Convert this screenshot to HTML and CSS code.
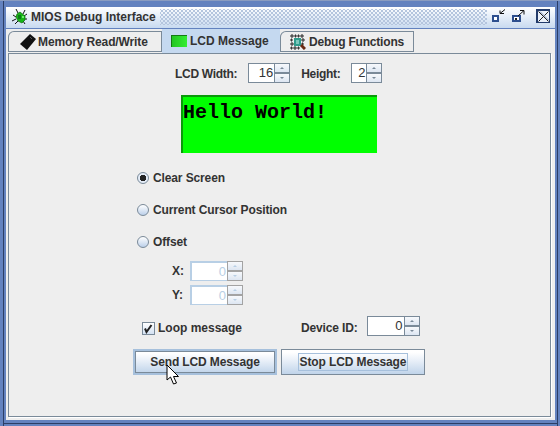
FILE: index.html
```html
<!DOCTYPE html>
<html lang="en">
<head>
    <meta charset="UTF-8">
    <title>MIOS Debug Interface</title>
    <link rel="stylesheet" href="styles.css">
</head>
<body>
    <div class="window">
        <div class="title-bar">
            <svg class="app-icon" width="16" height="16" viewBox="0 0 16 16">
                <path d="M4 0l2 4M1 6l3 2M0 12l4-2M3 15l3-3M13 1l-2 4M15 5l-3 2M15 10l-3 0M13 15l-2-3" stroke="#111" fill="none"/>
                <path d="M5 5l3-2 5 4 0 4-3 3-4-2-2-4z" fill="#17b517" stroke="#0a6a0a" stroke-width=".7"/>
                <path d="M6 6h3v4H6z" fill="#0d7a1a"/>
                <path d="M10 7h2v2h-2z" fill="#6ff06f"/>
            </svg>
            <span class="title-text">MIOS Debug Interface</span>
            <div class="title-dots"></div>
            <div class="title-buttons">
                <svg width="16" height="16" viewBox="0 0 16 16">
                    <rect x="2" y="7" width="5" height="5" fill="#fff" stroke="#2d4f8f" stroke-width="2"/>
                    <path d="M14 .5L9 4.5M9 1.5v3h4" stroke="#111" fill="none"/>
                </svg>
                <svg width="16" height="16" viewBox="0 0 16 16">
                    <rect x="3" y="7" width="7" height="5" fill="#fff" stroke="#2d4f8f" stroke-width="2"/>
                    <path d="M5 9h2v2H5z" fill="#222"/>
                    <path d="M8 7L14 1.5M10 1.5h4v4" stroke="#111" fill="none"/>
                </svg>
                <div class="close-btn">
                    <svg width="11" height="11" viewBox="0 0 11 11">
                        <path d="M.5 .5l10 10M10.5 .5l-10 10" stroke="#222" fill="none"/>
                        <path d="M2 .5l9 9" stroke="#8a9cc0" fill="none"/>
                    </svg>
                </div>
            </div>
        </div>

        <div class="tab-area">
            <div class="tabs">
                <div class="tab tab-memory">
                    <svg width="16" height="16" viewBox="0 0 16 16">
                        <path d="M10 0l6 5-9 11-7-6z" fill="#111"/>
                        <path d="M10 3l2 2" stroke="#555"/>
                    </svg>
                    Memory Read/Write
                </div>
                <div class="tab tab-active">
                    <span class="lcd-icon"></span>
                    LCD Message
                </div>
                <div class="tab tab-debug">
                    <svg width="16" height="16" viewBox="0 0 16 16">
                        <path d="M1 1h2v2H1zM5 1h1v2H5zM8 1h1v2H8zM11 1h2v2h-2zM1 5h1v2H1zM12 5h2v2h-2zM1 9h2v2H1zM12 9h1v2h-1zM1 13h1v2H1zM4 13h2v2H4zM8 13h1v2H8z" fill="#fff" stroke="#111" stroke-width=".9"/>
                        <rect x="4" y="4" width="7" height="8" fill="#2f9c8c"/>
                        <path d="M6 6h3v4H6z" fill="#7cc8bc"/>
                        <path d="M11 11l4 4" stroke="#6b2a10" stroke-width="3"/>
                    </svg>
                    Debug Functions
                </div>
            </div>

            <div class="panel">
                <div class="size-row">
                    <span class="label label-tight">LCD Width:</span>
                    <div class="spinner spin-16"><span class="spin-value">16</span><div class="spin-arrows"><i class="up"></i><i class="down"></i></div></div>
                    <span class="label label-tight height-label">Height:</span>
                    <div class="spinner spin-2"><span class="spin-value">2</span><div class="spin-arrows"><i class="up"></i><i class="down"></i></div></div>
                </div>

                <div class="lcd">Hello World!</div>

                <div class="radio-list">
                    <div class="radio-row"><span class="radio radio-on"></span><span class="label">Clear Screen</span></div>
                    <div class="radio-row"><span class="radio"></span><span class="label">Current Cursor Position</span></div>
                    <div class="radio-row"><span class="radio"></span><span class="label">Offset</span></div>
                </div>

                <div class="offset-grid">
                    <span class="label">X:</span>
                    <div class="spinner spin-off"><span class="spin-value">0</span><div class="spin-arrows"><i class="up"></i><i class="down"></i></div></div>
                    <span class="label">Y:</span>
                    <div class="spinner spin-off"><span class="spin-value">0</span><div class="spin-arrows"><i class="up"></i><i class="down"></i></div></div>
                </div>

                <div class="loop-row">
                    <span class="check">
                        <svg width="11" height="11" viewBox="0 0 11 11"><path d="M2 5.5l1.5 3.5L8.5 2" stroke="#222" stroke-width="2" fill="none"/></svg>
                    </span>
                    <span class="label loop-label">Loop message</span>
                    <span class="label device-label">Device ID:</span>
                    <div class="spinner spin-id"><span class="spin-value">0</span><div class="spin-arrows"><i class="up"></i><i class="down"></i></div></div>
                </div>

                <div class="button-row">
                    <div class="btn btn-hover">Send LCD Message
                        <svg class="cursor" width="14" height="21" viewBox="0 0 14 21">
                            <path d="M1 1v15l3.5-3 3 7 3-1-3-6.5h5z" fill="#fff" stroke="#000"/>
                        </svg>
                    </div>
                    <div class="btn"><span class="btn-focus">Stop LCD Message</span></div>
                </div>
            </div>
        </div>
    </div>
</body>
</html>
```

FILE: styles.css
```css
html, body {
    margin: 0;
    padding: 0;
}

body {
    width: 560px;
    height: 426px;
    overflow: hidden;
    font-family: "Liberation Sans", Arial, sans-serif;
    font-size: 12px;
    font-weight: bold;
    color: #333;
}

.window {
    box-sizing: border-box;
    width: 560px;
    height: 426px;
    padding: 7px 5px 6px 6px;
    display: flex;
    flex-direction: column;
    background-color: #6382bf;
    box-shadow: inset 0 1px #8a9cc0, inset 3px 0 #6382bf, inset 4px 0 #2c3e66,
        inset -2px 0 #6382bf, inset -3px 0 #2c3e66,
        inset 0 -2px #6382bf, inset 0 -3px #2c3e66;
}

.title-bar {
    box-sizing: border-box;
    height: 21px;
    flex: none;
    display: flex;
    align-items: center;
    padding: 0 5px 1px 6px;
    background: linear-gradient(#fff, #c8daf0);
}

.app-icon {
    margin-right: 3px;
}

.title-text {
    margin-right: 4px;
}

.title-dots {
    flex: 1;
    height: 16px;
    background-image: radial-gradient(#b4c5de .8px, transparent 1px), radial-gradient(#b4c5de .8px, transparent 1px);
    background-size: 4px 4px;
    background-position: 0 0, 2px 2px;
}

.title-buttons {
    display: flex;
    align-items: center;
    gap: 3px;
    margin-left: 4px;
}

.close-btn {
    box-sizing: border-box;
    width: 14px;
    height: 14px;
    margin: 0 0 2px 7px;
    display: flex;
    align-items: center;
    justify-content: center;
    background-color: #eaf0f9;
    border: 1px solid #223b6b;
    border-top-width: 2px;
    border-left-width: 2px;
}

.tab-area {
    flex: 1;
    display: flex;
    flex-direction: column;
    margin-top: 1px;
    padding: 0 4px 3px 2px;
    background-color: #eee;
}

.tabs {
    box-sizing: border-box;
    height: 24px;
    flex: none;
    display: flex;
    align-items: flex-end;
    padding: 0 0 2px 0;
}

.tab {
    box-sizing: border-box;
    height: 20px;
    display: flex;
    align-items: center;
    gap: 3px;
    letter-spacing: -.12px;
    background-color: #eee;
    border: 1px solid #7a8a99;
    border-bottom: none;
    border-top-left-radius: 6px;
}

.tab-memory {
    width: 154px;
    padding-left: 11px;
    gap: 2px;
    box-shadow: 0 1px #7a8a99;
}

.tab-active {
    width: 118px;
    height: 24px;
    margin-bottom: -2px;
    padding-left: 9px;
    letter-spacing: 0;
    background-color: #c5d9f0;
    border: none;
    border-top-left-radius: 0;
}

.tab-debug {
    width: 134px;
    padding-left: 9px;
    letter-spacing: -.2px;
    box-shadow: 0 1px #7a8a99;
}

.lcd-icon {
    box-sizing: border-box;
    width: 16px;
    height: 12px;
    margin-bottom: 1px;
    background: linear-gradient(90deg, #22c522, #33ee33);
    border-top: 1px solid #137a13;
    border-left: 1px solid #137a13;
}

.panel {
    flex: 1;
    display: flex;
    flex-direction: column;
    background-color: #eee;
    border: 1px solid #7a8a99;
    box-shadow: 1px 1px #fff;
}

.label {
    line-height: 14px;
    letter-spacing: -.12px;
}

.label-tight {
    letter-spacing: -.3px;
    padding-top: 2px;
}

.size-row {
    display: flex;
    align-items: center;
    height: 20px;
    margin-top: 9px;
    padding-left: 166px;
}

.spinner {
    box-sizing: border-box;
    display: flex;
    height: 20px;
    background-color: #fff;
    border-left: 1px solid #7a8a99;
    border-bottom: 1px solid #7a8a99;
    border-top: 1px solid #7a8a99;
    font-weight: normal;
}

.spin-value {
    flex: 1;
    text-align: right;
    line-height: 17px;
    padding-right: 1px;
    font-size: 13px;
}

.spin-arrows {
    box-sizing: border-box;
    width: 16px;
    display: flex;
    flex-direction: column;
    background-color: #eee;
    border: 1px solid #7a8a99;
    border-top: none;
    border-bottom: none;
}

.spin-arrows i {
    flex: 1;
    position: relative;
}

.spin-arrows .up {
    border-bottom: 2px solid #7a8a99;
    background: linear-gradient(#f7f9fc, #dde6f2);
}

.spin-arrows .down {
    background: linear-gradient(#f7f9fc, #dde6f2);
}

.spin-arrows i::after {
    content: "";
    position: absolute;
    left: 5px;
    top: 3px;
    border-left: 2px solid transparent;
    border-right: 2px solid transparent;
}

.spin-arrows .up::after {
    border-bottom: 2px solid #7a8a99;
}

.spin-arrows .down::after {
    border-top: 2px solid #7a8a99;
}

.spin-16 {
    width: 42px;
    margin-left: 11px;
}

.height-label {
    margin-left: 11px;
}

.spin-2 {
    width: 31px;
    margin-left: 11px;
}

.spin-off {
    width: 53px;
    color: #b8cfe5;
    border-color: #b8cfe5;
    border-left-width: 2px;
    border-top-width: 2px;
}

.spin-off .spin-arrows {
    border-color: #a3a3a3;
    margin: -2px 0 -1px;
    border-top: 1px solid #a3a3a3;
    border-bottom: 1px solid #a3a3a3;
    background-color: #eee;
}

.spin-off .spin-arrows .up {
    border-bottom-color: #a3a3a3;
}

.spin-off .spin-arrows .up::after {
    border-bottom-color: #b8cfe5;
}

.spin-off .spin-arrows .down::after {
    border-top-color: #b8cfe5;
}

.spin-id {
    width: 53px;
    margin: 0 0 4px 9px;
}

.lcd {
    box-sizing: border-box;
    width: 196px;
    height: 58px;
    margin: 12px 0 0 172px;
    padding: 4px 0 0 0;
    background-color: #0f0;
    border-top: 2px solid #0a990a;
    border-left: 2px solid #0a990a;
    font-family: "Liberation Mono", "Courier New", monospace;
    font-size: 20px;
    line-height: 24px;
    color: #000;
}

.radio-list {
    display: flex;
    flex-direction: column;
    gap: 16px;
    margin: 17px 0 0 128px;
}

.radio-row {
    display: flex;
    align-items: center;
    height: 16px;
    gap: 4px;
}

.radio {
    box-sizing: border-box;
    width: 12px;
    height: 12px;
    border-radius: 50%;
    border: 1px solid #7a8a99;
    background: linear-gradient(#fff, #bcd0ea);
}

.radio-on {
    background: radial-gradient(#222 3px, #e4ecf7 3.5px);
}

.offset-grid {
    display: grid;
    grid-template-columns: 18px 53px;
    row-gap: 4px;
    align-items: center;
    margin: 11px 0 0 163px;
}

.loop-row {
    display: flex;
    align-items: center;
    height: 20px;
    margin: 13px 0 0 133px;
}

.check {
    box-sizing: border-box;
    width: 13px;
    height: 13px;
    display: flex;
    align-items: center;
    justify-content: center;
    border: 1px solid #7a8a99;
    background: linear-gradient(#fff, #d4e2f3);
}

.loop-label {
    margin-left: 3px;
    letter-spacing: 0;
}

.device-label {
    margin-left: 59px;
    letter-spacing: -.15px;
}

.button-row {
    display: flex;
    gap: 4px;
    margin: 11px 0 0 124px;
}

.btn {
    position: relative;
    box-sizing: border-box;
    width: 144px;
    height: 26px;
    display: flex;
    align-items: center;
    justify-content: center;
    letter-spacing: -.12px;
    border: 1px solid #7a8a99;
    background: linear-gradient(#fff 10%, #e8eff8 45%, #c0d4ea);
}

.btn-hover {
    border: 2px solid #a6c0dc;
    box-shadow: inset 0 0 0 1px #7a8a99;
}

.btn-focus {
    box-sizing: border-box;
    width: 110px;
    height: 18px;
    border: 1px solid #a6c0dc;
    line-height: 16px;
    text-align: center;
}

.cursor {
    position: absolute;
    left: 31px;
    top: 13px;
}
```
